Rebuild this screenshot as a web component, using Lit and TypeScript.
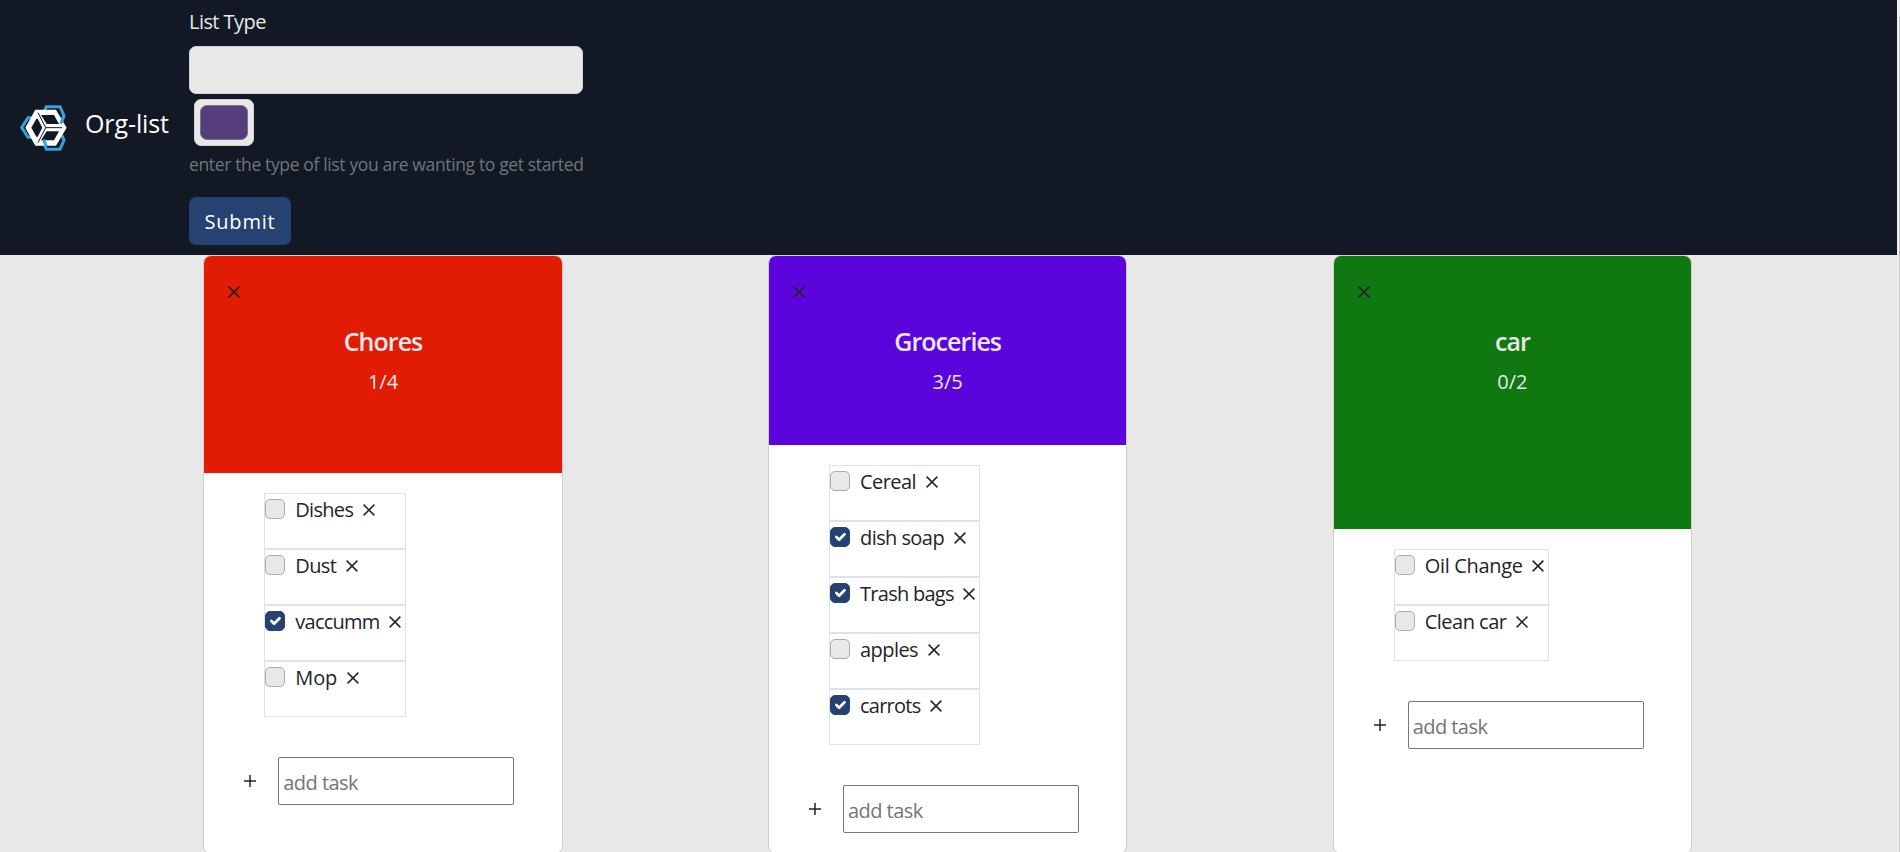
import { LitElement, html, css, svg } from "lit";
import { customElement, property } from "lit/decorators.js";

interface Task { text: string; done?: boolean; ls: number; }
interface List { name: string; color: string; width: number; tasks: Task[]; }

const lists: List[] = [
  { name: "Chores", color: "#e21c04", width: 142, tasks: [
    { text: "Dishes", ls: -0.7 }, { text: "Dust", ls: -0.6 },
    { text: "vaccumm", done: true, ls: -0.75 }, { text: "Mop", ls: -0.1 } ] },
  { name: "Groceries", color: "#5b05dc", width: 151, tasks: [
    { text: "Cereal", ls: -0.55 }, { text: "dish soap", done: true, ls: -0.57 },
    { text: "Trash bags", done: true, ls: -0.72 }, { text: "apples", ls: -0.55 },
    { text: "carrots", done: true, ls: -0.75 } ] },
  { name: "car", color: "#0f7810", width: 155, tasks: [
    { text: "Oil Change", ls: -0.32 }, { text: "Clean car", ls: -0.5 } ] },
];

const cross = html`<svg class="x" width="12" height="12" viewBox="0 0 12 12">${svg`<path d="M.6.6 11.4 11.4M11.4.6.6 11.4" fill="none" stroke="currentColor" stroke-width="1.5"/>`}</svg>`;

@customElement("list-card")
export class ListCard extends LitElement {
  @property({ attribute: false }) list!: List;

  static styles = css`
    :host { display: flex; flex-direction: column; box-sizing: border-box; height: 599px;
      background: #fff; border: 1px solid #cfcfcf; border-radius: 8px; overflow: hidden; }
    .head { flex: 1 1 169px; padding: 30px 24px 0; box-sizing: border-box; color: #e8e8e8; text-align: center; }
    .close { display: flex; color: #212529; }
    .x { display: block; flex: none; }
    .title { margin: 26px 0 0; font-size: 25px; line-height: 35px; font-weight: 600; letter-spacing: -0.95px; }
    .count { font-size: 20px; line-height: 30px; margin-top: 8px; }
    .body { flex: 1 1 auto; box-sizing: border-box; padding: 20px 0 0 60px; }
    .task { display: flex; align-items: flex-start; box-sizing: border-box; height: 56px;
      border: 1px solid #dee2e6; padding-top: 5px; color: #212529; }
    .box { box-sizing: border-box; width: 20px; height: 20px; border-radius: 5px; flex: none;
      border: 1px solid #adadad; background: #e8e8e8; }
    .done { background: #264272; border-color: #264272; }
    .box svg { display: block; width: 18px; height: 18px; }
    .name { font-size: 20px; line-height: 30px; margin: -4px 0 0 10px; padding-right: 9.5px; white-space: nowrap; }
    .task .x { margin-top: 5px; }
    .add { display: flex; align-items: center; margin: 40px 0 0 -20px; color: #212529; }
    .add .plus { display: block; margin-right: 22px; }
    input { box-sizing: border-box; width: 236px; height: 48px; border: 1px solid #767676; border-radius: 2px;
      padding: 3px 4px 1px; font: inherit; font-size: 20px; letter-spacing: -0.55px; background: #fff; outline: none; }
    input::placeholder { color: #757575; }
  `;

  render() {
    const l = this.list;
    return html`
      <div class="head" style="background:${l.color}">
        <div class="close">${cross}</div>
        <h5 class="title">${l.name}</h5>
        <div class="count">${l.tasks.filter(t => t.done).length}/${l.tasks.length}</div>
      </div>
      <div class="body">
        <div style="width:${l.width}px">
          ${l.tasks.map(t => html`<div class="task">
            <span class="box ${t.done ? "done" : ""}">${t.done ? html`<svg viewBox="0 0 20 20"><path d="m6 10 3 3 6-6" fill="none" stroke="#fff" stroke-width="3" stroke-linecap="round" stroke-linejoin="round"/></svg>` : ""}</span>
            <span class="name" style="letter-spacing:${t.ls}px">${t.text}</span>${cross}
          </div>`)}
        </div>
        <div class="add">
          <svg class="plus" width="12" height="12" viewBox="0 0 12 12"><path d="M0 6H12M6 0V12" stroke="currentColor" stroke-width="1.5"/></svg>
          <input placeholder="add task">
        </div>
      </div>`;
  }
}

@customElement("app-root")
export class AppRoot extends LitElement {
  static styles = css`
    :host { display: flex; width: 100%; height: 852px; overflow: hidden; background: #f0f0f0;
      font-family: "Open Sans", "Noto Sans", sans-serif; }
    .page { width: 1897px; background: #e8e8e8; }
    .nav { display: flex; align-items: center; box-sizing: border-box; height: 255px; background: #121925;
      padding-left: 20px; color: #fff; }
    .brand { display: flex; align-items: center; width: 169px; font-size: 25px; }
    .logo { display: block; margin-right: 18px; }
    .word { letter-spacing: -0.1px; margin-top: -10px; }
    form { width: 394px; height: 255px; display: flex; flex-direction: column; align-items: flex-start; }
    label { font-size: 20px; line-height: 30px; margin: 7px 0 9px; color: #e8e8e8; letter-spacing: -0.55px; }
    .text { box-sizing: border-box; width: 394px; height: 48px; border: 1px solid #ced4da; border-radius: 7px;
      background: #e8e8e8; }
    .color { box-sizing: border-box; width: 60px; height: 47px; margin: 5px 0 0 5px; padding: 5px 5px;
      border: 1px solid #ced4da; border-radius: 7px; background: #e8e8e8; }
    .swatch { box-sizing: border-box; height: 35px; border: 1px solid #777; border-radius: 7px; background: #563d7c; }
    .help { font-size: 17.5px; line-height: 26px; margin-top: 5px; color: #6c757d; white-space: nowrap; letter-spacing: -0.36px; }
    button { margin: 20px 0 0; width: 102px; height: 48px; padding: 0; border: 0; border-radius: 7px; background: #264272;
      color: #fff; font: inherit; font-size: 20px; letter-spacing: 0.8px; }
    .lists { display: grid; grid-template-columns: repeat(3, 359.4px); column-gap: 205.3px; padding-left: 203.3px; }
    .scroll { flex: none; box-sizing: border-box; width: 3px; padding: 17px 0 0 2px; }
    .thumb { height: 835px; background: #c1c1c1; }
  `;

  render() {
    return html`
      <div class="page">
        <nav class="nav">
          <div class="brand">
            <svg class="logo" width="47" height="48" viewBox="30 42 141 144" fill="none">
              <g stroke="#35a2dc" stroke-width="9">
                <path d="M80 83H54L35 113 54 142H76"/>
                <path d="M103 64 109 50H150L162 77 154 97"/>
                <path d="M103 162 109 178H150L162 151 156 136"/>
              </g>
              <path d="M76 59H138L170 113 138 167H76L46 113Z" fill="#fff"/>
              <path d="M64 113 79 86H83L97 113 83 140H79ZM93 75H132L147 102H110ZM93 151H132L147 124H110Z" fill="#121925"/>
              <path d="M84 68 107 113 84 158M107 113H156" stroke="#121925" stroke-width="3"/>
              <path d="M152 101 162 78M100 149 110 170" stroke="#35a2dc" stroke-width="9"/>
            </svg>
            <span class="word">Org-list</span>
          </div>
          <form>
            <label>List Type</label>
            <div class="text"></div>
            <div class="color"><div class="swatch"></div></div>
            <div class="help">enter the type of list you are wanting to get started</div>
            <button type="button">Submit</button>
          </form>
        </nav>
        <main class="lists">${lists.map(l => html`<list-card .list=${l}></list-card>`)}</main>
      </div>
      <div class="scroll"><div class="thumb"></div></div>`;
  }
}
